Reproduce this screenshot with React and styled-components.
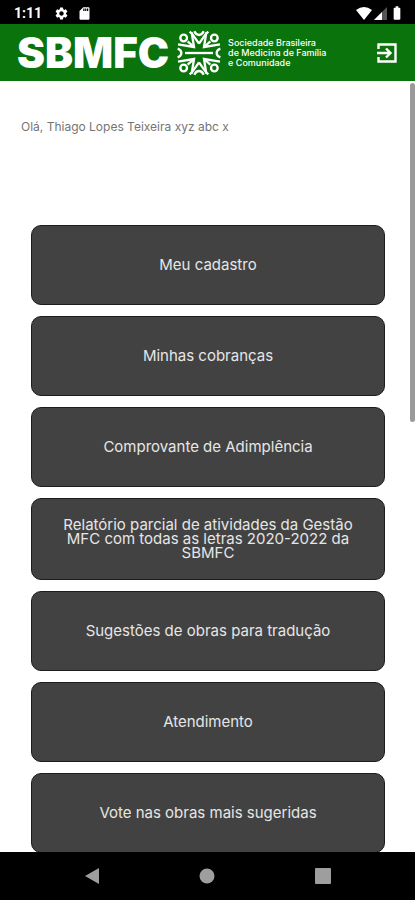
import React from 'react';
import styled, { createGlobalStyle } from 'styled-components';
import {
  MdSettings,
  MdSdCard,
  MdBatteryFull,
} from 'react-icons/md';

const menu = [
  'Meu cadastro',
  'Minhas cobranças',
  'Comprovante de Adimplência',
  'Relatório parcial de atividades da Gestão MFC com todas as letras 2020-2022 da SBMFC',
  'Sugestões de obras para tradução',
  'Atendimento',
  'Vote nas obras mais sugeridas',
];

// one quarter of the emblem, mirrored to make the other three
const Quarter = () => (
  <>
    <circle cx="-46" cy="-45" r="10" />
    <path d="M-28 -64 L-21 -58 L0 -28" />
    <path d="M-22 -62 L-15 -18 L-63 -26" />
    <path d="M-34 -35 L-15 -18" />
    <path d="M-14 -65 Q-9 -54 0 -54" />
    <path d="M-64 -13 Q-53 -9 -53 0" />
  </>
);

const Emblem = () => (
  <EmblemSvg viewBox="-66 -68 132 136" aria-hidden="true">
    <Quarter />
    <g transform="scale(-1 1)">
      <Quarter />
    </g>
    <g transform="scale(1 -1)">
      <Quarter />
    </g>
    <g transform="scale(-1 -1)">
      <Quarter />
    </g>
    <path d="M-42 0 H42" />
  </EmblemSvg>
);

const App = () => {
  return (
    <Screen>
      <GlobalStyle />
      <StatusBar>
        <StatusGroup>
          <Clock>1:11</Clock>
          <MdSettings size={15} />
          <MdSdCard size={15} />
        </StatusGroup>
        <SignalGroup>
          <svg width="16" height="13" viewBox="0 0 16 13">
            <path d="M0 3 Q8 -3 16 3 L8 13 Z" fill="#fff" />
          </svg>
          <svg width="13" height="13" viewBox="0 0 13 13">
            <path d="M13 0 V13 H0 Z" fill="#555" />
            <path d="M8 5 V13 H0 Z" fill="#fff" />
          </svg>
          <MdBatteryFull size={16} />
        </SignalGroup>
      </StatusBar>

      <Header>
        <Brand>SBMFC</Brand>
        <Emblem />
        <Tagline>
          Sociedade Brasileira
          <br />
          de Medicina de Família
          <br />e Comunidade
        </Tagline>
        <Logout aria-label="Sair">
          <svg width="22" height="22" viewBox="0 0 22 22">
            <path d="M2.5 7 V2.5 H19.5 V19.5 H2.5 V15" />
            <path d="M1 11 H14 M10 6.5 L14.5 11 L10 15.5" />
          </svg>
        </Logout>
      </Header>

      <Body>
        <Content>
          <Greeting>Olá, Thiago Lopes Teixeira xyz abc x</Greeting>
          <Menu>
            {menu.map(item => (
              <MenuButton key={item}>{item}</MenuButton>
            ))}
          </Menu>
        </Content>
        <ScrollThumb />
      </Body>

      <NavBar>
        <NavButton aria-label="Voltar">
          <svg width="16" height="18" viewBox="0 0 16 18">
            <path d="M15 1 V17 L1 9 Z" />
          </svg>
        </NavButton>
        <NavButton aria-label="Início">
          <svg width="16" height="16" viewBox="0 0 16 16">
            <circle cx="8" cy="8" r="7.5" />
          </svg>
        </NavButton>
        <NavButton aria-label="Recentes">
          <svg width="16" height="16" viewBox="0 0 16 16">
            <rect width="16" height="16" rx="1" />
          </svg>
        </NavButton>
      </NavBar>
    </Screen>
  );
};

export default App;

const GlobalStyle = createGlobalStyle`
  * {
    box-sizing: border-box;
  }

  body {
    margin: 0;
    background-color: #fff;
    font-family: Inter, 'Liberation Sans', sans-serif;
  }

  button {
    border: 0;
    padding: 0;
    font-family: inherit;
    cursor: pointer;
  }
`;

const Screen = styled.div`
  display: flex;
  flex-direction: column;
  height: 100vh;
`;

const StatusBar = styled.div`
  display: flex;
  justify-content: space-between;
  align-items: center;
  height: 24px;
  padding: 2px 10px 0 14px;
  background-color: #000;
  color: #fff;
`;

const StatusGroup = styled.div`
  display: flex;
  align-items: center;
  gap: 8px;
`;

const SignalGroup = styled(StatusGroup)`
  gap: 2px;
`;

const Clock = styled.span`
  margin-right: 4px;
  font-family: Roboto, sans-serif;
  font-size: 14px;
  font-weight: 700;
`;

const Header = styled.header`
  display: flex;
  align-items: center;
  height: 57px;
  padding: 0 17px;
  background-color: #0a730c;
  color: #fff;
`;

const Brand = styled.h1`
  margin: 0;
  font-size: 42px;
  font-weight: 900;
  line-height: 1;
`;

const EmblemSvg = styled.svg`
  width: 44px;
  height: 46px;
  margin-left: 8px;
  fill: none;
  stroke: #fff;
  stroke-width: 7;
`;

const Tagline = styled.p`
  margin: 0 0 0 7px;
  font-size: 9px;
  font-weight: 500;
  line-height: 10px;
  white-space: nowrap;
`;

const Logout = styled.button`
  display: flex;
  margin-left: auto;
  background: none;
  fill: none;
  stroke: #fff;
  stroke-width: 2.4;
`;

const Body = styled.main`
  position: relative;
  flex: 1;
  min-height: 0;
`;

const Content = styled.div`
  height: 100%;
  padding: 36px 30px 0 31px;
  overflow-y: auto;
  scrollbar-width: none;
`;

const Greeting = styled.p`
  margin: 0 0 88px -10px;
  color: #757575;
  font-size: 12px;
  line-height: 20px;
`;

const Menu = styled.nav`
  display: flex;
  flex-direction: column;
  gap: 11px;
`;

const MenuButton = styled.button`
  min-height: 80px;
  padding: 19px 24px;
  border: 1px solid #1c1c1c;
  border-radius: 10px;
  background-color: #424242;
  color: #e6e6e6;
  font-size: 15px;
  line-height: 14px;
`;

const ScrollThumb = styled.div`
  position: absolute;
  top: 2px;
  right: 0;
  width: 5px;
  height: 44%;
  border-radius: 3px;
  background-color: #9a9a9a;
`;

const NavBar = styled.footer`
  display: flex;
  justify-content: space-around;
  align-items: center;
  height: 48px;
  padding: 0 34px;
  background-color: #000;
`;

const NavButton = styled.button`
  display: flex;
  background: none;
  fill: #9e9e9e;
`;
